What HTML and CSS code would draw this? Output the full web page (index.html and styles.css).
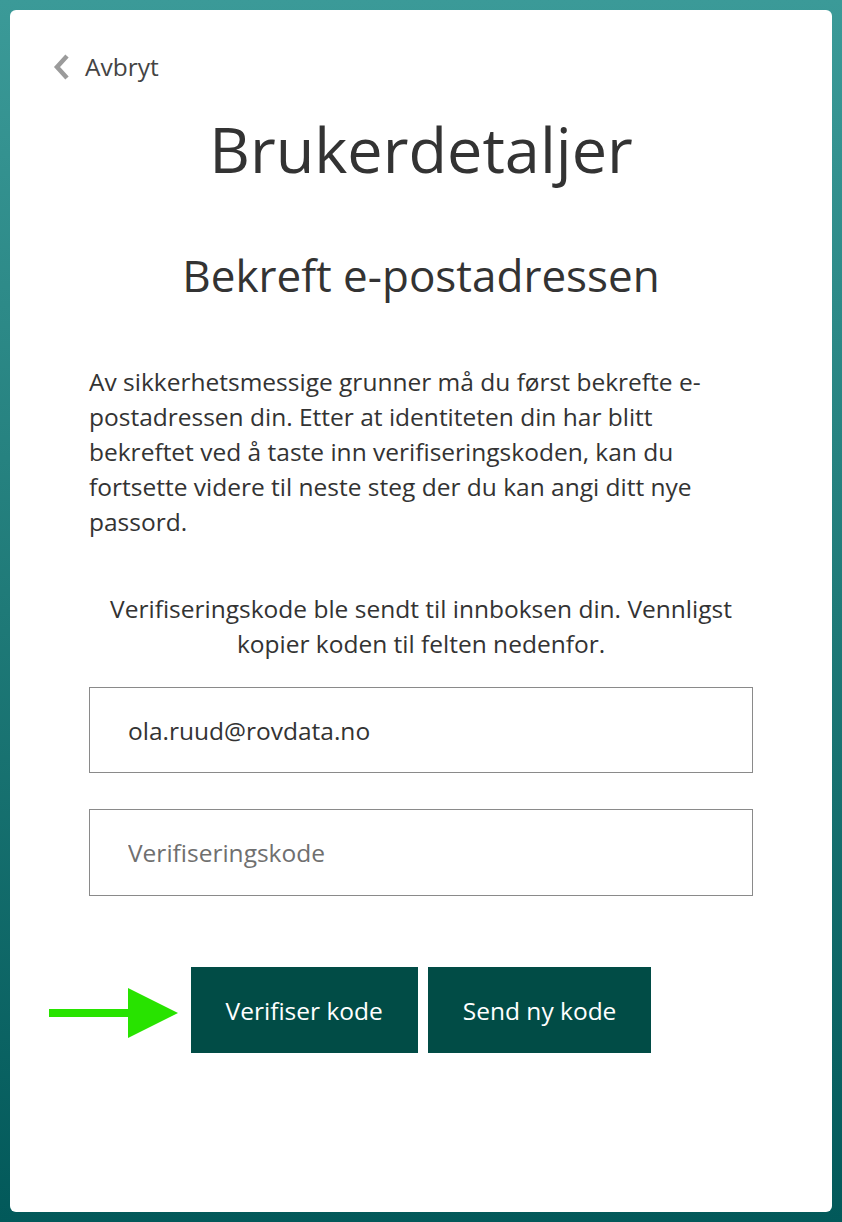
FILE: index.html
```html
<!DOCTYPE html>
<html lang="no">
<head>
<meta charset="utf-8">
<title>Brukerdetaljer</title>
<link rel="stylesheet" href="styles.css">
</head>
<body>
<div class="page">
  <main class="card">
    <a class="back" href="#">
      <svg class="back-icon" width="18" height="26" viewBox="0 0 18 26" aria-hidden="true">
        <polyline points="14,2 4,13 14,24" fill="none" stroke="#9b9b9b" stroke-width="4.5"/>
      </svg>
      <span>Avbryt</span>
    </a>
    <section class="content">
      <h1 class="title">Brukerdetaljer</h1>
      <h2 class="subtitle">Bekreft e-postadressen</h2>
      <p class="intro">Av sikkerhetsmessige grunner må du først bekrefte e-postadressen din. Etter at identiteten din har blitt bekreftet ved å taste inn verifiseringskoden, kan du fortsette videre til neste steg der du kan angi ditt nye passord.</p>
      <p class="notice">Verifiseringskode ble sendt til innboksen din. Vennligst kopier koden til felten nedenfor.</p>
      <input class="field" type="email" value="ola.ruud@rovdata.no">
      <input class="field field-code" type="text" placeholder="Verifiseringskode">
      <div class="actions">
        <svg class="pointer" width="130" height="50" viewBox="0 0 130 50" aria-hidden="true">
          <rect x="0" y="21" width="82" height="8" fill="#28e300"/>
          <polygon points="79,0 129,25 79,50" fill="#28e300"/>
        </svg>
        <button class="btn" type="button">Verifiser kode</button>
        <button class="btn" type="button">Send ny kode</button>
      </div>
    </section>
  </main>
</div>
</body>
</html>
```
FILE: styles.css
```css
* { box-sizing: border-box; }
html, body {
  margin: 0;
  padding: 0;
}
body {
  font-family: "Open Sans", "Noto Sans", sans-serif;
  color: #333333;
  background: linear-gradient(to bottom, #3b9a98 0%, #1f7a78 50%, #02595a 100%);
  min-height: 1222px;
}
.page {
  padding: 10px;
}
.card {
  background: #ffffff;
  border-radius: 6px;
  height: 1202px;
  padding-top: 42px;
}
.back {
  display: flex;
  align-items: center;
  gap: 14px;
  margin-left: 43px;
  width: max-content;
  font-size: 24.5px;
  line-height: 30px;
  color: #444444;
  text-decoration: none;
}
.back-icon { display: block; }
.content {
  padding: 0 79px;
  display: flex;
  flex-direction: column;
}
.title {
  margin: 29px 0 0;
  font-size: 63px;
  line-height: 1.2;
  font-weight: 400;
  text-align: center;
  color: #333333;
}
.subtitle {
  margin: 62px 0 0;
  font-size: 44px;
  line-height: 1.2;
  font-weight: 400;
  text-align: center;
  color: #333333;
}
.intro {
  margin: 63px 0 0;
  font-size: 24.5px;
  line-height: 35px;
}
.notice {
  margin: 52px 0 0;
  font-size: 24.5px;
  line-height: 35px;
  text-align: center;
}
.field {
  display: block;
  width: 100%;
  height: 86px;
  margin: 26px 0 0;
  padding: 0 0 0 38px;
  border: 1px solid #8a8a8a;
  border-radius: 0;
  font-family: inherit;
  font-size: 24.5px;
  color: #333333;
  background: #ffffff;
  outline: none;
}
.field-code { margin-top: 36px; height: 87px; }
.field::placeholder { color: #6f6f6f; opacity: 1; }
.actions {
  position: relative;
  display: flex;
  justify-content: center;
  gap: 10px;
  margin-top: 71px;
}
.pointer {
  position: absolute;
  left: -40px;
  top: 21px;
}
.btn {
  height: 86px;
  padding: 0 35px;
  border: none;
  border-radius: 0;
  background: #014c46;
  color: #ffffff;
  font-family: inherit;
  font-size: 24.5px;
  cursor: pointer;
}
```
